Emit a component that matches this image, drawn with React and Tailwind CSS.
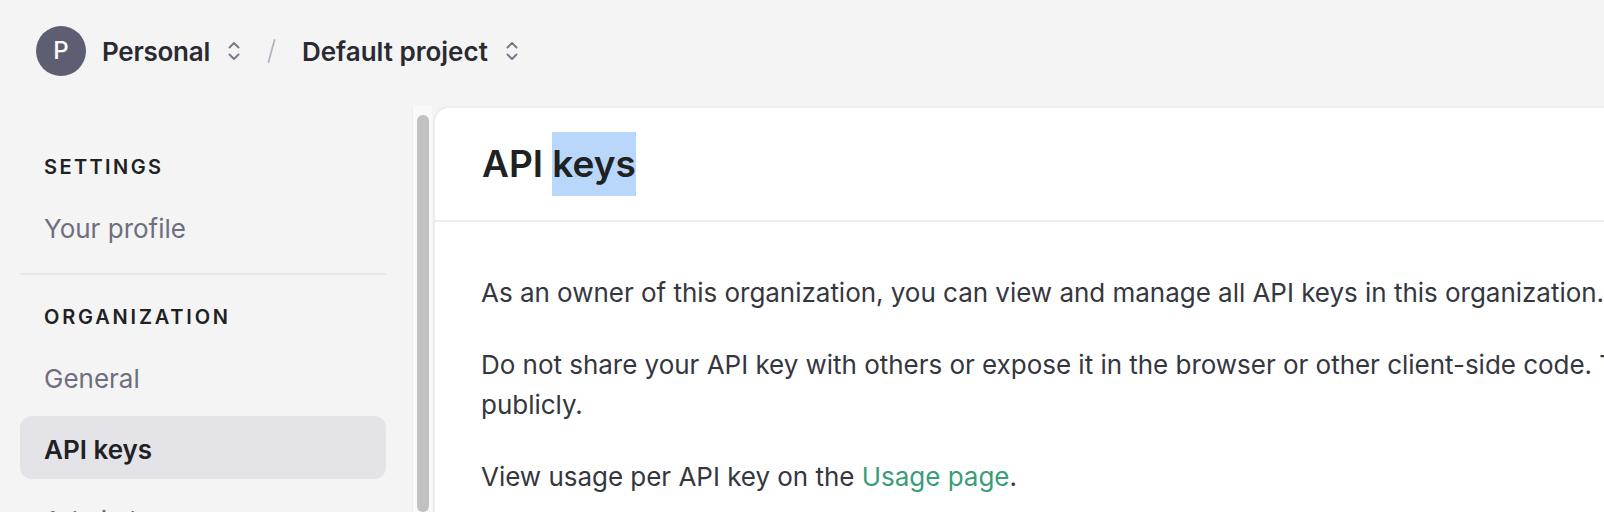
import React from "react";

function UpDown() {
  return (
    <svg width="12" height="22" viewBox="0 0 12 22" fill="none" stroke="#7b7b8c" strokeWidth="2" strokeLinecap="round" strokeLinejoin="round">
      <path d="M1.5 7.5 L6 3 L10.5 7.5" />
      <path d="M1.5 14.5 L6 19 L10.5 14.5" />
    </svg>
  );
}

function NavItem({ label, active }) {
  return (
    <div
      className={
        "h-[63px] flex items-center pl-[24px] pt-[4px] rounded-[12px] text-[26px] " +
        (active ? "bg-[#e3e3e8] text-[#202123] font-semibold" : "text-[#6e6e80]")
      }
    >
      {label}
    </div>
  );
}

function Label({ children, wide }) {
  return (
    <div
      className={
        "h-[32px] flex items-center pl-[24px] text-[20px] font-semibold text-[#202123] " +
        (wide ? "tracking-[0.14em]" : "tracking-[0.12em]")
      }
    >
      {children}
    </div>
  );
}

export default function App() {
  return (
    <div className="w-[1604px] h-[512px] overflow-hidden bg-[#f4f4f4] font-['Inter',sans-serif] antialiased">
      <header className="h-[106px] pb-[4px] pl-[36px] flex items-center">
        <div className="w-[50px] h-[50px] rounded-full bg-[#5e5e72] text-white flex items-center justify-center text-[24px] font-medium">
          P
        </div>
        <span className="ml-[16px] text-[26px] font-semibold tracking-[-0.01em] text-[#2a2b32]">Personal</span>
        <span className="ml-[18px] flex"><UpDown /></span>
        <svg className="ml-[27px]" width="9" height="24" viewBox="0 0 9 24" fill="none" stroke="#b4b4c0" strokeWidth="1.8" strokeLinecap="round">
          <path d="M7.5 1 L1.5 23" />
        </svg>
        <span className="ml-[26px] text-[26px] font-semibold text-[#2a2b32]">Default project</span>
        <span className="ml-[18px] flex"><UpDown /></span>
      </header>

      <div className="flex h-[406px]">
        <aside className="w-[412px] shrink-0 pl-[20px] pr-[26px] pt-[45px]">
          <Label>SETTINGS</Label>
          <div className="mt-[12px]">
            <NavItem label="Your profile" />
          </div>
          <div className="mt-[15px] h-[2px] bg-[#e8e8ed]" />
          <div className="mt-[26px]">
            <Label wide>ORGANIZATION</Label>
          </div>
          <div className="mt-[12px] flex flex-col gap-[8px]">
            <NavItem label="General" />
            <NavItem label="API keys" active />
            <NavItem label="Admin keys" />
          </div>
        </aside>

        <div className="w-[20px] shrink-0 bg-[#f9f9f9] border-l border-[#ececec] pt-[9px] flex justify-center">
          <div className="w-[12px] h-full rounded-full bg-[#c1c1c1]" />
        </div>

        <main className="ml-[1px] flex-1 bg-white border-t-2 border-l-2 border-[#ececf1] rounded-tl-[16px]">
          <div className="h-[114px] border-b-2 border-[#ececf1] px-[47px] pt-[24px]">
            <h1 className="text-[37px] leading-[64px] font-semibold text-[#202123] whitespace-nowrap">
              API <span className="inline-block bg-[#b9d6fb]">keys</span>
            </h1>
          </div>
          <div className="px-[46px] pt-[51px] text-[26px] leading-[40px] tracking-[-0.001em] text-[#353740] whitespace-nowrap">
            <p>As an owner of this organization, you can view and manage all API keys in this organization.</p>
            <p className="mt-[32px]">
              Do not share your API key with others or expose it in the browser or other client-side code. To protect
              <br />
              publicly.
            </p>
            <p className="mt-[32px]">
              View usage per API key on the <span className="text-[#3b9d78]">Usage page</span>.
            </p>
          </div>
        </main>
      </div>
    </div>
  );
}
